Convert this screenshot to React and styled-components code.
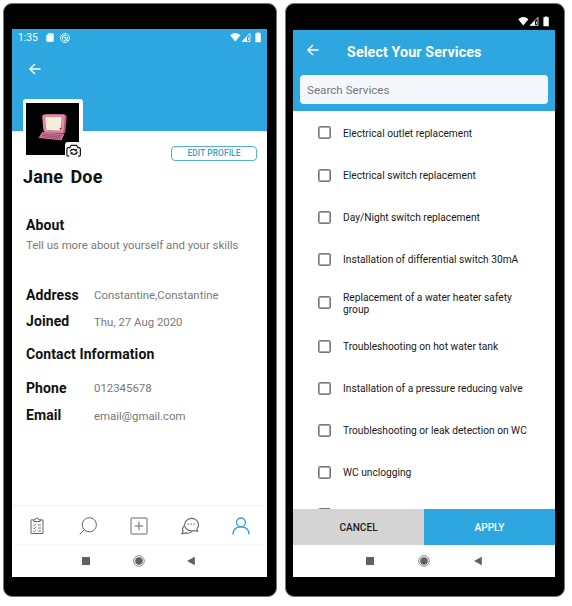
import React from 'react';
import styled, { createGlobalStyle } from 'styled-components';

const Global = createGlobalStyle`
  * { box-sizing: border-box; }
  body { margin: 0; background: #fff; font-family: Roboto, sans-serif; color: #111; }
  button, input { font-family: inherit; }
`;

const Stage = styled.main`
  width: 572px;
  height: 606px;
  padding: 3px 0 0 3px;
  display: flex;
  gap: 8px;
  overflow: hidden;
`;

const Phone = styled.section`
  width: ${(p) => p.$width}px;
  height: 594px;
  border: 1px solid #777;
  border-radius: 9px;
  background: #000;
  display: flex;
  flex-direction: column;
  padding: ${(p) => p.$pad};
`;

const Screen = styled.div`
  flex: 1;
  min-height: 0;
  display: flex;
  flex-direction: column;
  background: #fff;
  overflow: hidden;
`;

const ProfileHeader = styled.header`
  height: 102px;
  flex: none;
  background: #2ea7e0;
  color: #fff;
`;

const StatusBar = styled.div`
  display: flex;
  align-items: center;
  height: 17px;
  padding: 0 5px 0 6px;
  font-size: 10.2px;
  svg { display: block; }
`;

const StatusLeft = styled.div`
  flex: 1;
  display: flex;
  align-items: center;
  gap: 6.5px;
  span { width: 21px; }
`;

const DarkStatus = styled.div`
  height: 26px;
  flex: none;
  display: flex;
  justify-content: flex-end;
  padding: 12px 5px 0 0;
`;

const BackButton = styled.button`
  display: block;
  width: 14px;
  height: 14px;
  padding: 0;
  border: 0;
  background: none;
  margin: ${(p) => p.$margin};
  svg { display: block; }
`;

const ProfileBody = styled.div`
  flex: 1;
  display: flex;
  flex-direction: column;
`;

const IdentityRow = styled.div`
  display: flex;
  justify-content: space-between;
  align-items: flex-end;
  height: 61px;
  margin: -32px 10px 0 11px;
`;

const AvatarCard = styled.div`
  width: 60px;
  height: 61px;
  padding: 4px 4px 5px 3px;
  border-radius: 3px;
  background: #fcfdfe;
  svg { display: block; }
`;

const EditButton = styled.button`
  width: 86px;
  height: 15px;
  margin-bottom: -1px;
  padding: 0;
  border: 1px solid #54b0d4;
  border-radius: 4px;
  background: #fff;
  color: #379fcb;
  font-size: 8.4px;
  font-weight: 500;
  line-height: 13px;
  letter-spacing: 0.08px;
`;

const Name = styled.h1`
  margin: 5px 0 0 11px;
  height: 24px;
  line-height: 24px;
  font-size: 18px;
  font-weight: 700;
  letter-spacing: 0.15px;
  word-spacing: 2.8px;
`;

const Details = styled.div`
  padding: 26px 0 0 14px;
`;

const Heading = styled.h2`
  margin: ${(p) => p.$gap || 0}px 0 0;
  height: 20px;
  line-height: 20px;
  font-size: 14px;
  font-weight: 700;
  letter-spacing: 0.1px;
`;

const Muted = styled.p`
  margin: ${(p) => p.$top || 0}px 0 0;
  height: 20px;
  line-height: 20px;
  font-size: 11.4px;
  color: #797979;
  white-space: nowrap;
`;

const Field = styled.div`
  display: grid;
  grid-template-columns: 68px 1fr;
  margin-top: ${(p) => p.$gap}px;
  height: 20px;
`;

const TabBar = styled.nav`
  flex: none;
  height: 40px;
  border-top: 1px solid #f3f3f3;
  border-bottom: 1px solid #f8f8f8;
  padding: 1px 1px 0 0;
  display: grid;
  grid-template-columns: repeat(5, 1fr);
  align-items: center;
  justify-items: center;
`;

const Tab = styled.a`
  display: block;
  color: ${(p) => (p.$active ? '#2f9fd0' : '#666')};
  svg { display: block; }
`;

const SystemNav = styled.div`
  flex: none;
  height: ${(p) => p.$height}px;
  padding-right: ${(p) => p.$shift || 0}px;
  display: grid;
  grid-template-columns: 10px 12px 10px;
  column-gap: ${(p) => p.$gap}px;
  align-items: center;
  justify-content: center;
  svg { display: block; }
`;

const ServicesHeader = styled.header`
  flex: none;
  height: 81px;
  padding: 10px 7px 0;
  background: #2ea7e0;
  color: #fff;
`;

const TitleRow = styled.div`
  display: flex;
  height: 24px;
`;

const Title = styled.h1`
  margin: 0 0 0 27px;
  font-size: 14.2px;
  line-height: 24px;
  font-weight: 700;
  letter-spacing: 0.15px;
  white-space: nowrap;
`;

const Search = styled.input`
  display: block;
  width: 248px;
  height: 29px;
  margin: 11px 0 0;
  padding: 0 7px;
  border: 0;
  border-radius: 4px;
  background: #f4f8fd;
  font-size: 11.65px;
  color: #333;
  &::placeholder { color: #777; opacity: 1; }
`;

const ServiceList = styled.div`
  flex: 1;
  min-height: 0;
  padding-top: 0.9px;
  overflow: hidden;
`;

const ServiceRow = styled.label`
  display: flex;
  align-items: center;
  height: ${(p) => (p.$tall ? 44.6 : 42.2)}px;
  padding-left: 25px;
  gap: 12px;
  &:last-child { height: 40.4px; }
`;

const Box = styled.span`
  flex: none;
  width: 13px;
  height: 13px;
  border: 1px solid #777;
  border-radius: 2px;
  box-shadow: inset 0 0 0 1px #a8a8a8;
`;

const ServiceText = styled.span`
  width: 190px;
  padding-top: 1.2px;
  font-size: 10.2px;
  line-height: 12px;
  color: #181818;
`;

const Actions = styled.div`
  display: grid;
  grid-template-columns: 1fr 1fr;
  height: 36px;
  flex: none;
`;

const Action = styled.button`
  border: 0;
  padding: 0;
  font-size: 10.1px;
  font-weight: 500;
  background: ${(p) => (p.$primary ? '#2ea7e0' : '#d4d4d4')};
  color: ${(p) => (p.$primary ? '#fff' : '#222')};
`;

const BackArrow = () => (
  <svg width="14" height="14" viewBox="0 0 14 14" fill="none" stroke="#fff" strokeWidth="1.4">
    <path d="M12.5 7H2M7 1.9 1.9 7 7 12.1" />
  </svg>
);

const StatusIcons = () => (
  <svg width="32" height="11" viewBox="0 0 32 11">
    <path d="M.2 3.2Q5.3-1.4 10.4 3.2L5.3 9.6Z" fill="#fff" />
    <path d="M12.2 9.4 20 1.4V9.4Z" fill="none" stroke="#fff" strokeWidth=".8" />
    <path d="M12 9.4 17 4.4V9.4Z" fill="#fff" />
    <path d="M18.5 5.5V8" stroke="#fff" strokeWidth=".8" />
    <path d="M25.4 1.3h1.4V.4h2.6v.9h1.4v8.9h-5.4Z" fill="#fff" />
  </svg>
);

const SdIcon = () => (
  <svg width="8" height="9" viewBox="0 0 8 9">
    <path d="M2.6.2H7q.7 0 .7.7v7.2q0 .7-.7.7H1q-.7 0-.7-.7V2.6Z" fill="#fff" />
    <path d="M3.4 1.2v1.4M5 1.2v1.4M6.5 1.2v1.4" stroke="#8bcff0" strokeWidth=".6" />
  </svg>
);

const SyncBadge = () => (
  <svg width="10" height="10" viewBox="0 0 10 10" fill="none" stroke="#fff">
    <circle cx="5" cy="5" r="4.4" strokeWidth=".9" />
    <path d="M2.7 6.3A2.6 2.6 0 0 1 6.5 2.9M7.4 4A2.7 2.7 0 0 1 3.4 7.1M3.4 3.6 8 8.1" strokeWidth="1" />
    <path d="M4.3 3.7H6.5V5.8Z" fill="#fff" stroke="none" />
  </svg>
);

const Avatar = () => (
  <svg width="55" height="54" viewBox="0 0 55 54">
    <rect width="53" height="52" fill="#020202" />
    <path d="M19 12 21 11 37.5 11.3q3.2.1 3.2 2.6L39.4 28.4q-.3 2.4-2.6 2.3L19 29.5Z" fill="#b8557e" />
    <path d="M16.2 13.6q0-2.2 2.2-2.2H36q2.8 0 2.7 2.5l-1.1 14q-.2 2.2-2.4 2.1l-15.6-.9q-2-.1-2.2-2.1Z" fill="#e48eac" />
    <path d="M18.9 15.2q0-1.6 1.6-1.6h13.7q1.9 0 1.8 1.9l-.9 10.8q-.2 1.8-1.9 1.7l-11.7-.6q-1.6-.1-1.7-1.6Z" fill="#f2eedc" stroke="#a94c6d" strokeWidth=".5" />
    <circle cx="34.5" cy="25.6" r=".9" fill="#a50f30" />
    <path d="M16.5 29.3 37.9 31.5 35.3 36.9 13 34.7Z" fill="#d8759b" stroke="#e9a0bb" strokeWidth=".5" />
    <path d="m17.2 30.9 18.6 1.9M16 32.3l18.9 2M15 33.8l19 1.9" stroke="#633145" strokeWidth=".8" strokeDasharray="1.3 .7" />
    <path d="M39 42q0-3 3-3h13v15H39Z" fill="#fcfdfe" />
    <g fill="none" stroke="#151515" strokeWidth="1.2">
      <path d="M43 53.2H42q-1.1 0-1.1-1.2v-6q0-1.4 1.3-1.4h1.6l1.4-2.3h5.2l1.4 2.3h1.1q1.5 0 1.5 1.4V52q0 1.2-1.2 1.2H52" />
      <path d="M44.1 48.4q1.1-2.3 3.5-2 1.7.2 2.4 1.2M51.3 48.8q-.8 2.6-3.5 2.5-1.6 0-2.6-1.3" />
    </g>
    <path d="m50.7 45.6.2 2.8-2.8-.5ZM44.6 51.8l-.1-2.7 2.7.4Z" fill="#151515" />
  </svg>
);

const TasksIcon = () => (
  <svg width="16" height="18" viewBox="0 0 16 18" fill="none" stroke="currentColor" strokeWidth="1">
    <path d="M5 2.9H2V16.5H14V2.9H11" />
    <path d="M4.8 4.5V2.8H6.3Q6.5 1 8 1t1.7 1.8h1.5v1.7Z" />
    <path d="m4.2 7.8 1 1 2-2M9 8h3M4.2 10.8l1 1 2-2M9 11h3M4.2 13.8l1 1 2-2M9 14h3" strokeWidth=".9" />
  </svg>
);

const SearchIcon = () => (
  <svg width="18" height="18" viewBox="0 0 18 18" fill="none" stroke="currentColor" strokeWidth="1">
    <circle cx="10.3" cy="7.8" r="7.1" />
    <path d="M5.2 12.8.7 17.3" />
  </svg>
);

const AddIcon = () => (
  <svg width="18" height="18" viewBox="0 0 18 18" fill="none" stroke="currentColor" strokeWidth="1">
    <rect x="1" y="1" width="16" height="16" rx=".8" />
    <path d="M4.7 9h8.6M9 4.7v8.6" />
  </svg>
);

const ChatIcon = () => (
  <svg width="18" height="18" viewBox="0 0 18 18" fill="none" stroke="currentColor" strokeWidth="1.1">
    <path d="M16 11.6A6.9 6.3 0 1 0 10.2 14Q12 14 13.3 13.5L17.2 14.4Q15.6 13.3 16 11.6Z" />
    <path d="M3.3 8.6Q.4 11.3 2.2 14L.9 16.7 4.8 15.9q4 1.2 6.3-1.9" />
    <path d="M6.6 7.2h1.2M9.5 7.2h1.2M12.4 7.2h1.2" strokeWidth="1.3" />
  </svg>
);

const UserIcon = () => (
  <svg width="18" height="18" viewBox="0 0 18 18" fill="none" stroke="currentColor" strokeWidth="1.3">
    <circle cx="9" cy="5.4" r="4.4" />
    <path d="M.9 17.5q.3-7.6 8.1-7.6t8.1 7.6" />
  </svg>
);

const AndroidButtons = ({ height, gap, shift }) => (
  <SystemNav $height={height} $gap={gap} $shift={shift}>
    <svg width="10" height="10" viewBox="0 0 10 10"><rect x="1" y="1" width="8" height="8" fill="#606060" /></svg>
    <svg width="12" height="12" viewBox="0 0 12 12">
      <circle cx="6" cy="6" r="5.3" fill="#fff" stroke="#777" strokeWidth=".9" />
      <circle cx="6" cy="6" r="3.8" fill="#606060" />
    </svg>
    <svg width="10" height="10" viewBox="0 0 10 10"><path d="M1 5 8.8.7v8.6Z" fill="#606060" /></svg>
  </SystemNav>
);

const services = [
  'Electrical outlet replacement',
  'Electrical switch replacement',
  'Day/Night switch replacement',
  'Installation of differential switch 30mA',
  'Replacement of a water heater safety group',
  'Troubleshooting on hot water tank',
  'Installation of a pressure reducing valve',
  'Troubleshooting or leak detection on WC',
  'WC unclogging',
  '',
];

const ProfilePhone = () => (
  <Phone $width={274} $pad="25px 9px 19px 8px">
    <Screen>
      <ProfileHeader>
        <StatusBar>
          <StatusLeft><span>1:35</span><SdIcon /><SyncBadge /></StatusLeft>
          <StatusIcons />
        </StatusBar>
        <BackButton $margin="16px 0 0 16px" aria-label="Back"><BackArrow /></BackButton>
      </ProfileHeader>
      <ProfileBody>
        <IdentityRow>
          <AvatarCard><Avatar /></AvatarCard>
          <EditButton>EDIT PROFILE</EditButton>
        </IdentityRow>
        <Name>Jane Doe</Name>
        <Details>
          <Heading>About</Heading>
          <Muted>Tell us more about yourself and your skills</Muted>
          <Field $gap={30}><Heading>Address</Heading><Muted>Constantine,Constantine</Muted></Field>
          <Field $gap={6}><Heading>Joined</Heading><Muted $top={1}>Thu, 27 Aug 2020</Muted></Field>
          <Heading $gap={13}>Contact Information</Heading>
          <Field $gap={14}><Heading>Phone</Heading><Muted>012345678</Muted></Field>
          <Field $gap={7}><Heading>Email</Heading><Muted $top={1}>email@gmail.com</Muted></Field>
        </Details>
      </ProfileBody>
      <TabBar>
        <Tab><TasksIcon /></Tab>
        <Tab><SearchIcon /></Tab>
        <Tab><AddIcon /></Tab>
        <Tab><ChatIcon /></Tab>
        <Tab $active><UserIcon /></Tab>
      </TabBar>
      <AndroidButtons height={32} gap={41.5} shift={1.5} />
    </Screen>
  </Phone>
);

const ServicesPhone = () => (
  <Phone $width={280} $pad="0 9px 19px 7px">
    <DarkStatus><StatusIcons /></DarkStatus>
    <Screen>
      <ServicesHeader>
        <TitleRow>
          <BackButton $margin="3px 0 0 6px" aria-label="Back"><BackArrow /></BackButton>
          <Title>Select Your Services</Title>
        </TitleRow>
        <Search placeholder="Search Services" />
      </ServicesHeader>
      <ServiceList>
        {services.map((name, i) => (
          <ServiceRow key={i} $tall={i === 4}>
            <Box />
            <ServiceText>{name}</ServiceText>
          </ServiceRow>
        ))}
      </ServiceList>
      <Actions>
        <Action>CANCEL</Action>
        <Action $primary>APPLY</Action>
      </Actions>
      <AndroidButtons height={32} gap={43} />
    </Screen>
  </Phone>
);

export default function App() {
  return (
    <>
      <Global />
      <Stage>
        <ProfilePhone />
        <ServicesPhone />
      </Stage>
    </>
  );
}
